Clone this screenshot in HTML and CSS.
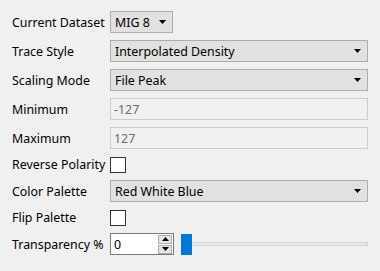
FILE: index.html
```html
<!DOCTYPE html>
<html lang="en">
  <head>
    <meta charset="UTF-8" />
    <title>Trace Settings</title>
    <link rel="stylesheet" href="styles.css">
  </head>
  <body>
    <div class="panel">
      <label class="lbl">Current Dataset</label>
      <div class="row">
        <div class="combo combo-small"><span>MIG 8</span><svg class="arrow" width="7" height="4"><polygon points="0,0 7,0 3.5,4" /></svg></div>
      </div>

      <label class="lbl">Trace Style</label>
      <div class="combo"><span>Interpolated Density</span><svg class="arrow" width="7" height="4"><polygon points="0,0 7,0 3.5,4" /></svg></div>

      <label class="lbl">Scaling Mode</label>
      <div class="combo"><span>File Peak</span><svg class="arrow" width="7" height="4"><polygon points="0,0 7,0 3.5,4" /></svg></div>

      <label class="lbl">Minimum</label>
      <div class="edit disabled">-127</div>

      <label class="lbl">Maximum</label>
      <div class="edit disabled">127</div>

      <label class="lbl">Reverse Polarity</label>
      <div class="row"><div class="check"></div></div>

      <label class="lbl">Color Palette</label>
      <div class="combo"><span>Red White Blue</span><svg class="arrow" width="7" height="4"><polygon points="0,0 7,0 3.5,4" /></svg></div>

      <label class="lbl">Flip Palette</label>
      <div class="row"><div class="check"></div></div>

      <label class="lbl">Transparency %</label>
      <div class="row slider-row">
        <div class="spin">
          <span class="spin-val">0</span>
          <div class="spin-btns">
            <div class="spin-btn"><svg width="7" height="4"><polygon points="0,4 7,4 3.5,0" /></svg></div>
            <div class="spin-btn"><svg width="7" height="4"><polygon points="0,0 7,0 3.5,4" /></svg></div>
          </div>
        </div>
        <div class="slider">
          <div class="groove"></div>
          <div class="handle"></div>
        </div>
      </div>
    </div>
  </body>
</html>
```

FILE: styles.css
```css
html, body {
  margin: 0;
  background: #f0f0f0;
}
body {
  font-family: "Noto Sans", "DejaVu Sans", sans-serif;
  font-size: 12.4px;
  color: #000;
}
.panel {
  display: grid;
  grid-template-columns: 98px 1fr;
  row-gap: 7px;
  padding: 11px 12px 0 12px;
  align-items: center;
}
.lbl {
  white-space: nowrap;
}
.row {
  display: flex;
  align-items: center;
}
.combo {
  height: 22px;
  box-sizing: border-box;
  border: 1px solid #adadad;
  background: #e1e1e1;
  display: flex;
  align-items: center;
  padding: 0 6px 0 4px;
}
.combo span {
  flex: 1;
}
.combo-small {
  width: 63px;
}
.arrow {
  display: block;
}
.edit {
  height: 22px;
  box-sizing: border-box;
  border: 1px solid #cccccc;
  display: flex;
  align-items: center;
  padding: 0 3px;
}
.edit.disabled {
  color: #6d6d6d;
  background: #f0f0f0;
}
.check {
  width: 16px;
  height: 16px;
  box-sizing: border-box;
  border: 1px solid #333333;
  background: #ffffff;
}
.slider-row {
  gap: 7px;
}
.spin {
  width: 64px;
  height: 22px;
  box-sizing: border-box;
  border: 1px solid #7a7a7a;
  background: #ffffff;
  display: flex;
  align-items: center;
  padding: 0 1px 0 3px;
}
.spin-val {
  flex: 1;
}
.spin-btns {
  display: flex;
  flex-direction: column;
  gap: 1px;
}
.spin-btn {
  width: 14px;
  height: 9px;
  box-sizing: border-box;
  border: 1px solid #adadad;
  background: #e5e5e5;
  display: flex;
  align-items: center;
  justify-content: center;
}
.spin-btn svg {
  display: block;
}
.slider {
  flex: 1;
  position: relative;
  height: 21px;
}
.groove {
  position: absolute;
  left: 0;
  right: 0;
  top: 8px;
  height: 4px;
  box-sizing: border-box;
  border: 1px solid #d6d6d6;
  background: #e7e7e7;
}
.handle {
  position: absolute;
  left: 0;
  top: 0;
  width: 11px;
  height: 21px;
  background: #0078d7;
}
```
